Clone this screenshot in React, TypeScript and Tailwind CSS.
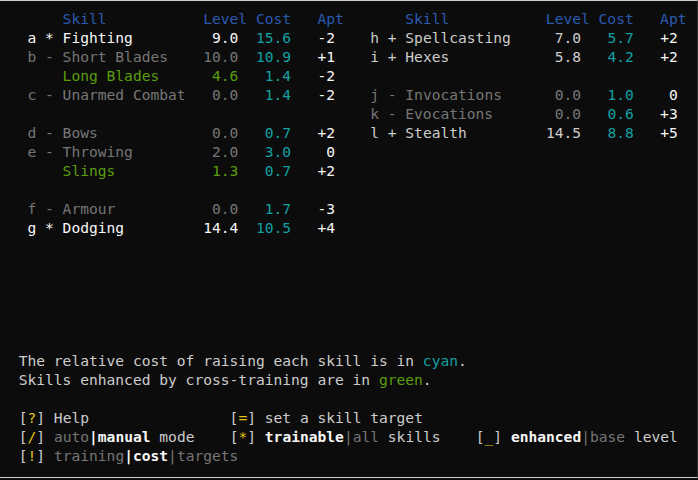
import React from 'react';

// Terminal palette (full class names so Tailwind picks them up)
const TONE = {
    hdr: 'text-[#2a5bb0]',
    on: 'text-[#f7f7f7]',
    plus: 'text-[#cccccc]',
    off: 'text-[#767676]',
    cross: 'text-[#5b9e0c]',
    cyan: 'text-[#13a0a3]',
    yellow: 'text-[#e0c21a]',
} as const;

type Tone = 'on' | 'plus' | 'off' | 'cross';

interface Skill {
    key?: string;
    mark?: string;
    name: string;
    level: string;
    cost: string;
    apt: string;
    tone: Tone;
}

const LEFT: (Skill | null)[] = [
    { key: 'a', mark: '*', name: 'Fighting', level: '9.0', cost: '15.6', apt: '-2', tone: 'on' },
    { key: 'b', mark: '-', name: 'Short Blades', level: '10.0', cost: '10.9', apt: '+1', tone: 'off' },
    { name: 'Long Blades', level: '4.6', cost: '1.4', apt: '-2', tone: 'cross' },
    { key: 'c', mark: '-', name: 'Unarmed Combat', level: '0.0', cost: '1.4', apt: '-2', tone: 'off' },
    null,
    { key: 'd', mark: '-', name: 'Bows', level: '0.0', cost: '0.7', apt: '+2', tone: 'off' },
    { key: 'e', mark: '-', name: 'Throwing', level: '2.0', cost: '3.0', apt: '0', tone: 'off' },
    { name: 'Slings', level: '1.3', cost: '0.7', apt: '+2', tone: 'cross' },
    null,
    { key: 'f', mark: '-', name: 'Armour', level: '0.0', cost: '1.7', apt: '-3', tone: 'off' },
    { key: 'g', mark: '*', name: 'Dodging', level: '14.4', cost: '10.5', apt: '+4', tone: 'on' },
];

const RIGHT: (Skill | null)[] = [
    { key: 'h', mark: '+', name: 'Spellcasting', level: '7.0', cost: '5.7', apt: '+2', tone: 'plus' },
    { key: 'i', mark: '+', name: 'Hexes', level: '5.8', cost: '4.2', apt: '+2', tone: 'plus' },
    null,
    { key: 'j', mark: '-', name: 'Invocations', level: '0.0', cost: '1.0', apt: '0', tone: 'off' },
    { key: 'k', mark: '-', name: 'Evocations', level: '0.0', cost: '0.6', apt: '+3', tone: 'off' },
    { key: 'l', mark: '+', name: 'Stealth', level: '14.5', cost: '8.8', apt: '+5', tone: 'plus' },
];

// one 39-column half of the table; the right half drops its trailing pad
const Half = ({ s, last }: { s: Skill | null | undefined; last?: boolean }) => {
    if (!s) return last ? null : <span>{' '.repeat(39)}</span>;
    const head = s.key ? ` ${s.key} ${s.mark} ` : '     ';
    return (
        <>
            <span className={TONE[s.tone]}>{head + s.name.padEnd(16) + s.level.padStart(4)}</span>
            <span>{'  '}</span>
            <span className={TONE.cyan}>{s.cost.padStart(4)}</span>
            <span>{'   '}</span>
            <span className={TONE.on}>{s.apt.padStart(2)}</span>
            {!last && <span>{'   '}</span>}
        </>
    );
};

const Header = ({ last }: { last?: boolean }) => (
    <span className={TONE.hdr}>{'     Skill           Level Cost   Apt' + (last ? '' : '  ')}</span>
);

const Line = ({ children }: { children?: React.ReactNode }) => (
    <div className="h-[19px] leading-[19px] whitespace-pre">{children ?? ' '}</div>
);

const Key = ({ k }: { k: string }) => (
    <span className={TONE.plus}>
        [<span className={TONE.yellow}>{k}</span>]
    </span>
);

export default function App() {
    const rows = Math.max(LEFT.length, RIGHT.length);

    return (
        <div className="w-[698px] h-[480px] bg-[#0c0c0c] overflow-hidden">
            <div
                className="h-[478px] border-t border-b border-r border-t-[#d0d0d0] border-b-[#d0d0d0] border-r-[#2e2e2e] pl-[18.7px] pt-[7.5px] text-[14.6px] text-[#cccccc]"
                style={{ fontFamily: '"DejaVu Sans Mono", "Liberation Mono", monospace' }}
            >
                <Line>
                    <Header />
                    <Header last />
                </Line>
                {Array.from({ length: rows }).map((_, i) => (
                    <Line key={i}>
                        <Half s={LEFT[i]} />
                        <Half s={RIGHT[i]} last />
                    </Line>
                ))}
                {Array.from({ length: 18 - rows - 1 }).map((_, i) => (
                    <Line key={`gap${i}`} />
                ))}

                <Line>
                    The relative cost of raising each skill is in <span className={TONE.cyan}>cyan</span>.
                </Line>
                <Line>
                    Skills enhanced by cross-training are in <span className={TONE.cross}>green</span>.
                </Line>
                <Line />
                <Line>
                    <Key k="?" />{' Help                '}
                    <Key k="=" />{' set a skill target'}
                </Line>
                <Line>
                    <Key k="/" />{' '}
                    <span className={TONE.off}>auto</span>
                    <span className="font-bold text-[#f7f7f7]">|manual</span>{' mode    '}
                    <Key k="*" />{' '}
                    <span className="font-bold text-[#f7f7f7]">trainable</span>
                    <span className={TONE.off}>|all</span>{' skills    '}
                    <Key k="_" />{' '}
                    <span className="font-bold text-[#f7f7f7]">enhanced</span>
                    <span className={TONE.off}>|base</span>{' level'}
                </Line>
                <Line>
                    <Key k="!" />{' '}
                    <span className={TONE.off}>training</span>
                    <span className="font-bold text-[#f7f7f7]">|cost</span>
                    <span className={TONE.off}>|targets</span>
                </Line>
            </div>
        </div>
    );
}
